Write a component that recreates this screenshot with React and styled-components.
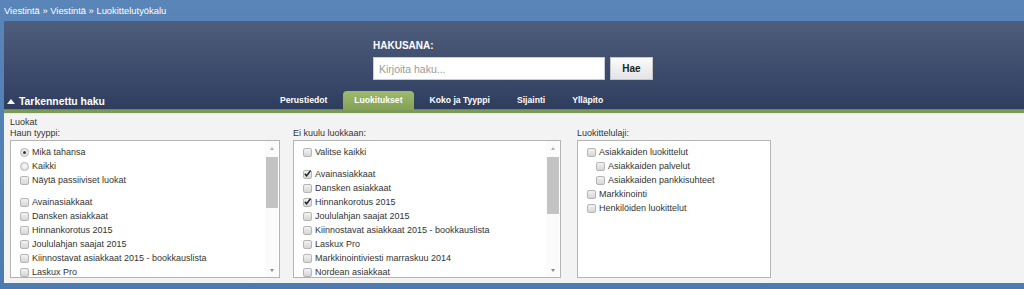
import React from "react";
import styled, { createGlobalStyle } from "styled-components";

const Global = createGlobalStyle`
  html, body { margin: 0; padding: 0; }
  body {
    background: #4f7eb3;
    font-family: "Liberation Sans", Arial, sans-serif;
    overflow: hidden;
  }
`;

const Page = styled.div`
  width: 1024px;
  height: 289px;
  background: linear-gradient(#5985b8, #4c7bb1);
  display: flex;
  flex-direction: column;
  overflow: hidden;
`;

const Breadcrumb = styled.div`
  height: 21px;
  padding: 0 4px;
  color: #fff;
  font-size: 9.4px;
  line-height: 21px;
  box-sizing: border-box;
`;

const Panel = styled.div`
  margin-left: 4px;
  margin-right: -6px;
  display: flex;
  flex-direction: column;
`;

const Header = styled.div`
  height: 89px;
  background: linear-gradient(#505e7d, #2e3c5e);
  border-top-right-radius: 6px;
  border-bottom: 3px solid #7c9956;
  box-shadow: inset 0 -1px 0 #6f8c4d;
  display: flex;
  flex-direction: column;
`;

const SearchArea = styled.div`
  padding: 19px 0 0 369px;
  display: flex;
  flex-direction: column;
`;

const SearchLabel = styled.div`
  color: #fff;
  font-weight: bold;
  font-size: 10px;
  line-height: 12px;
  margin-bottom: 5px;
`;

const SearchRow = styled.div`
  display: flex;
  gap: 5px;
`;

const SearchInput = styled.input`
  width: 232px;
  height: 23px;
  box-sizing: border-box;
  border: 1px solid #c9ccd3;
  background: #fff;
  padding: 0 5px;
  font-family: "Liberation Sans", Arial, sans-serif;
  font-size: 10.5px;
  outline: none;
  &::placeholder { color: #9a9a9a; }
`;

const SearchButton = styled.button`
  width: 43px;
  height: 23px;
  box-sizing: border-box;
  border: 1px solid #c6c6c6;
  background: linear-gradient(#fbfbfb, #e3e3e3);
  font-family: "Liberation Sans", Arial, sans-serif;
  font-weight: bold;
  font-size: 10px;
  color: #222;
  padding: 0;
`;

const TabsRow = styled.div`
  margin-top: auto;
  display: flex;
  align-items: flex-end;
  height: 19px;
`;

const Toggle = styled.div`
  flex: 0 0 265px;
  box-sizing: border-box;
  padding: 2px 0 0 3px;
  color: #fff;
  font-weight: bold;
  font-size: 10.4px;
  line-height: 17px;
  display: flex;
  align-items: center;
  gap: 4px;
`;

const Arrow = styled.span`
  width: 0;
  height: 0;
  border-left: 4px solid transparent;
  border-right: 4px solid transparent;
  border-bottom: 5px solid #fff;
`;

const Tabs = styled.div`
  display: flex;
  gap: 5px;
  height: 19px;
`;

const Tab = styled.div`
  padding: 0 11px;
  height: 19px;
  line-height: 19px;
  color: #fff;
  font-weight: bold;
  font-size: 8.6px;
  border-radius: 4px 4px 0 0;
  background: ${(p) => (p.$active ? "linear-gradient(#9fba6c, #84a055)" : "transparent")};
`;

const Content = styled.div`
  background: #f3f3f3;
  padding: 3px 6px 5px;
  color: #333;
  font-size: 9px;
  border-top: 1px solid #e4ecd7;
`;

const Heading = styled.div`
  line-height: 11px;
`;

const Columns = styled.div`
  display: flex;
`;

const Column = styled.div`
  width: ${(p) => p.$w}px;
  margin-left: ${(p) => p.$ml || 0}px;
  display: flex;
  flex-direction: column;
`;

const ColLabel = styled.div`
  line-height: 11px;
  margin-bottom: 1px;
`;

const Box = styled.div`
  height: 138px;
  box-sizing: border-box;
  border: 1px solid #b4b4b4;
  background: #fff;
  display: flex;
  overflow: hidden;
`;

const List = styled.div`
  flex: 1;
  padding: 4px 0 0 9px;
  overflow: hidden;
`;

const Row = styled.div`
  height: 14px;
  display: flex;
  align-items: center;
  gap: 3px;
  padding-left: ${(p) => (p.$indent ? 9 : 0)}px;
  white-space: nowrap;
`;

const Spacer = styled.div`
  height: 8px;
`;

const Check = styled.span`
  width: 9px;
  height: 9px;
  box-sizing: border-box;
  border: 1px solid #b5b5b5;
  border-radius: 2px;
  background: linear-gradient(#f2f2f2, #d6d6d6);
  flex: none;
  position: relative;
  display: inline-flex;
  align-items: center;
  justify-content: center;
`;

const Radio = styled.span`
  width: 9px;
  height: 9px;
  box-sizing: border-box;
  border: 1px solid #b5b5b5;
  border-radius: 50%;
  background: radial-gradient(circle at 50% 40%, #fafafa, #d8d8d8);
  flex: none;
  display: inline-flex;
  align-items: center;
  justify-content: center;
  &::after {
    content: "";
    width: 3px;
    height: 3px;
    border-radius: 50%;
    background: ${(p) => (p.$on ? "#333" : "transparent")};
  }
`;

const Scrollbar = styled.div`
  width: 13px;
  flex: none;
  margin-right: 1px;
  background: #fbfbfb;
  display: flex;
  flex-direction: column;
  align-items: center;
`;

const ScrollBtn = styled.div`
  height: 14px;
  display: flex;
  align-items: center;
  justify-content: center;
`;

const Tri = styled.span`
  width: 0;
  height: 0;
  border-left: 2.5px solid transparent;
  border-right: 2.5px solid transparent;
  ${(p) =>
    p.$down ? "border-top: 3px solid #8a8a8a;" : "border-bottom: 3px solid #b0b0b0;"}
`;

const Track = styled.div`
  flex: 1;
  width: 100%;
  padding-top: 2px;
  display: flex;
  justify-content: center;
`;

const Thumb = styled.div`
  width: 12px;
  background: #c3c3c3;
`;

const CheckBox = ({ on }) => (
  <Check>
    {on && (
      <svg width="9" height="9" viewBox="0 0 9 9" style={{ position: "absolute", left: -1, top: -2 }}>
        <path d="M1.8 4.8 L3.6 6.8 L7.6 1.6" stroke="#222" strokeWidth="1.5" fill="none" />
      </svg>
    )}
  </Check>
);

const Item = ({ label, on, indent }) => (
  <Row $indent={indent}>
    <CheckBox on={on} />
    <span>{label}</span>
  </Row>
);

const ScrollBar = ({ thumb }) => (
  <Scrollbar>
    <ScrollBtn><Tri /></ScrollBtn>
    <Track>
      <Thumb style={{ height: thumb }} />
    </Track>
    <ScrollBtn><Tri $down /></ScrollBtn>
  </Scrollbar>
);

const groups = [
  "Avainasiakkaat",
  "Dansken asiakkaat",
  "Hinnankorotus 2015",
  "Joululahjan saajat 2015",
  "Kiinnostavat asiakkaat 2015 - bookkauslista",
  "Laskux Pro",
];

const excluded = [
  ["Avainasiakkaat", true],
  ["Dansken asiakkaat", false],
  ["Hinnankorotus 2015", true],
  ["Joululahjan saajat 2015", false],
  ["Kiinnostavat asiakkaat 2015 - bookkauslista", false],
  ["Laskux Pro", false],
  ["Markkinointiviesti marraskuu 2014", false],
  ["Nordean asiakkaat", false],
];

export default function App() {
  return (
    <Page>
      <Global />
      <Breadcrumb>Viestintä » Viestintä » Luokittelutyökalu</Breadcrumb>
      <Panel>
        <Header>
          <SearchArea>
            <SearchLabel>HAKUSANA:</SearchLabel>
            <SearchRow>
              <SearchInput placeholder="Kirjoita haku..." />
              <SearchButton>Hae</SearchButton>
            </SearchRow>
          </SearchArea>
          <TabsRow>
            <Toggle>
              <Arrow />
              Tarkennettu haku
            </Toggle>
            <Tabs>
              <Tab>Perustiedot</Tab>
              <Tab $active>Luokitukset</Tab>
              <Tab>Koko ja Tyyppi</Tab>
              <Tab>Sijainti</Tab>
              <Tab>Ylläpito</Tab>
            </Tabs>
          </TabsRow>
        </Header>
        <Content>
          <Heading>Luokat</Heading>
          <Columns>
            <Column $w={270}>
              <ColLabel>Haun tyyppi:</ColLabel>
              <Box>
                <List>
                  <Row>
                    <Radio $on />
                    <span>Mikä tahansa</span>
                  </Row>
                  <Row>
                    <Radio />
                    <span>Kaikki</span>
                  </Row>
                  <Item label="Näytä passiiviset luokat" />
                  <Spacer />
                  {groups.map((g) => (
                    <Item key={g} label={g} />
                  ))}
                </List>
                <ScrollBar thumb={51} />
              </Box>
            </Column>
            <Column $w={268} $ml={13}>
              <ColLabel>Ei kuulu luokkaan:</ColLabel>
              <Box>
                <List>
                  <Item label="Valitse kaikki" />
                  <Spacer />
                  {excluded.map(([g, on]) => (
                    <Item key={g} label={g} on={on} />
                  ))}
                </List>
                <ScrollBar thumb={57} />
              </Box>
            </Column>
            <Column $w={194} $ml={16}>
              <ColLabel>Luokittelulaji:</ColLabel>
              <Box>
                <List>
                  <Item label="Asiakkaiden luokittelut" />
                  <Item indent label="Asiakkaiden palvelut" />
                  <Item indent label="Asiakkaiden pankkisuhteet" />
                  <Item label="Markkinointi" />
                  <Item label="Henkilöiden luokittelut" />
                </List>
              </Box>
            </Column>
          </Columns>
        </Content>
      </Panel>
    </Page>
  );
}
